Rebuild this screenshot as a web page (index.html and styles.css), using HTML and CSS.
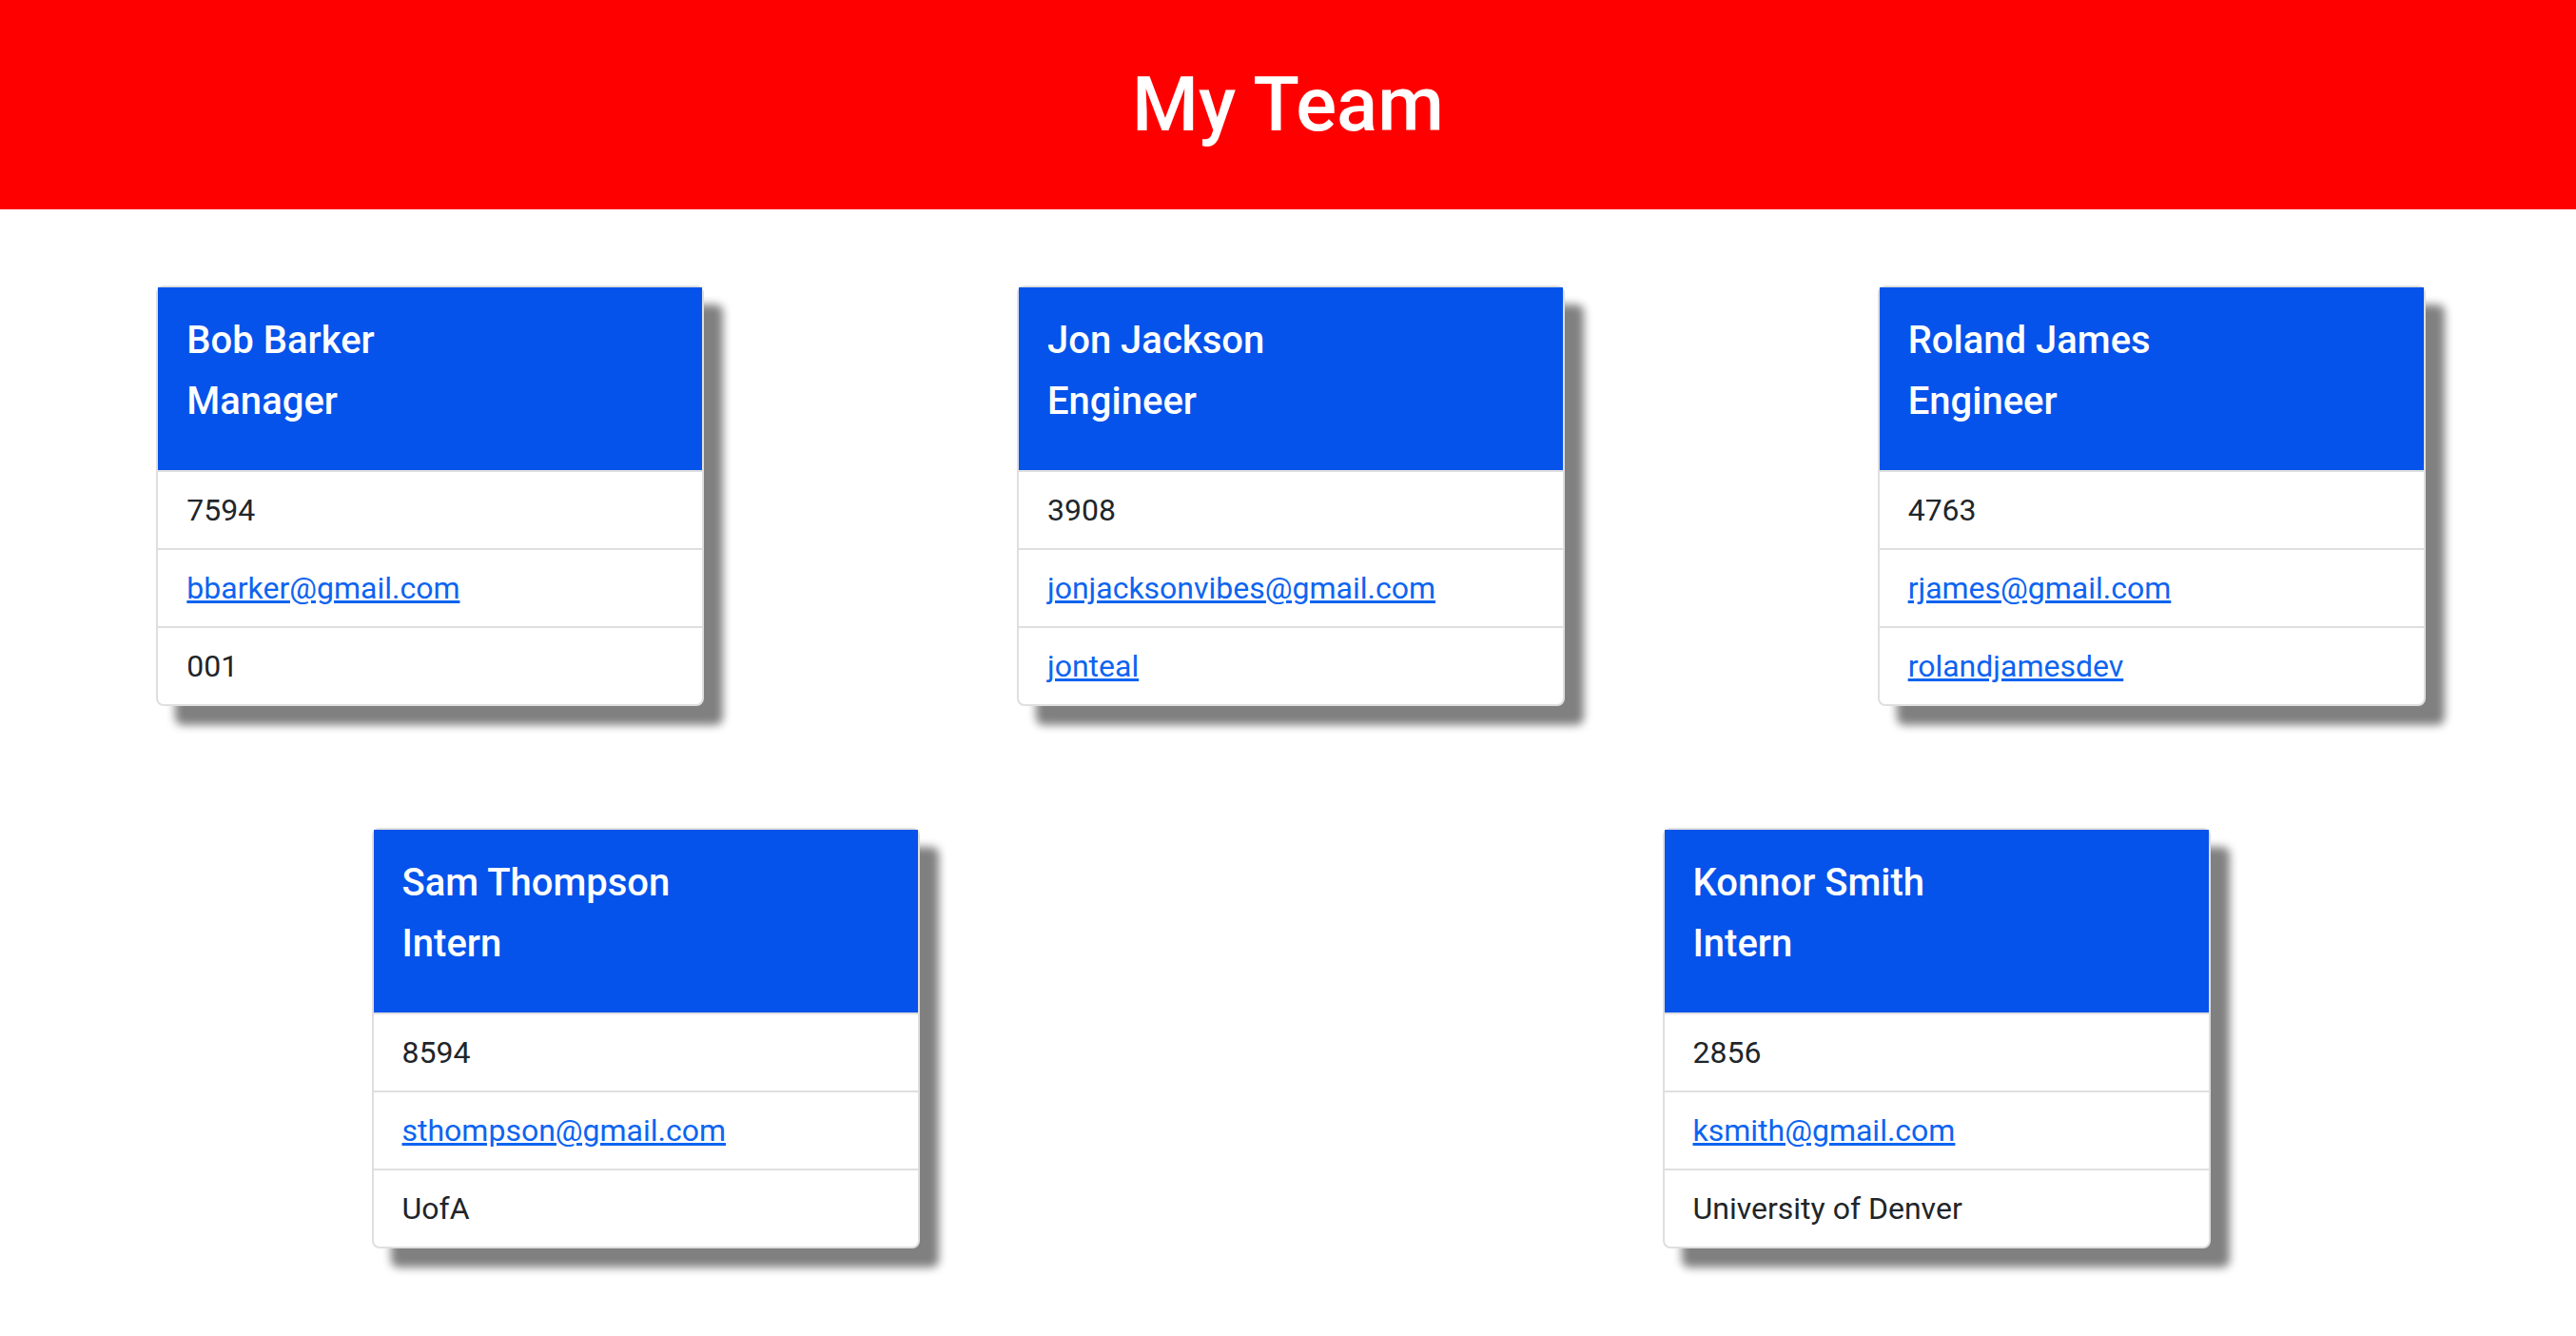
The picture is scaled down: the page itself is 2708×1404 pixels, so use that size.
FILE: index.html
```html
<!DOCTYPE html>
<html>
<head>
    <meta charset="UTF-8">
    <meta name="viewport" content="width=device-width, initial-scale=1.0">
    <title>My Team</title>
    <link rel="stylesheet" href="styles.css">
</head>
<body>
    <header class="banner">
        <h1>My Team</h1>
    </header>

    <main class="team">
        <div class="team-row">
            <div class="card">
                <div class="card-body">
                    <h5>Bob Barker</h5>
                    <h5>Manager</h5>
                </div>
                <ul class="list-group">
                    <li>7594</li>
                    <li><a href="mailto:bbarker@gmail.com">bbarker@gmail.com</a></li>
                    <li>001</li>
                </ul>
            </div>

            <div class="card">
                <div class="card-body">
                    <h5>Jon Jackson</h5>
                    <h5>Engineer</h5>
                </div>
                <ul class="list-group">
                    <li>3908</li>
                    <li><a href="mailto:jonjacksonvibes@gmail.com">jonjacksonvibes@gmail.com</a></li>
                    <li><a href="#">jonteal</a></li>
                </ul>
            </div>

            <div class="card">
                <div class="card-body">
                    <h5>Roland James</h5>
                    <h5>Engineer</h5>
                </div>
                <ul class="list-group">
                    <li>4763</li>
                    <li><a href="mailto:rjames@gmail.com">rjames@gmail.com</a></li>
                    <li><a href="#">rolandjamesdev</a></li>
                </ul>
            </div>
        </div>

        <div class="team-row">
            <div class="card">
                <div class="card-body">
                    <h5>Sam Thompson</h5>
                    <h5>Intern</h5>
                </div>
                <ul class="list-group">
                    <li>8594</li>
                    <li><a href="mailto:sthompson@gmail.com">sthompson@gmail.com</a></li>
                    <li>UofA</li>
                </ul>
            </div>

            <div class="card">
                <div class="card-body">
                    <h5>Konnor Smith</h5>
                    <h5>Intern</h5>
                </div>
                <ul class="list-group">
                    <li>2856</li>
                    <li><a href="mailto:ksmith@gmail.com">ksmith@gmail.com</a></li>
                    <li>University of Denver</li>
                </ul>
            </div>
        </div>
    </main>
</body>
</html>
```

FILE: styles.css
```css
body {
    margin: 0;
    overflow-x: hidden;
    font-family: Roboto, "Liberation Sans", sans-serif;
    font-size: 32px;
    line-height: 48px;
    color: #212529;
    background: #fff;
}

.banner {
    height: 220px;
    background: #ff0000;
    display: flex;
    align-items: center;
    justify-content: center;
}

.banner h1 {
    margin: 0;
    color: #fff;
    font-size: 80px;
    font-weight: 500;
    line-height: 96px;
}

.team {
    padding-top: 80px;
}

.team-row {
    display: flex;
    justify-content: space-around;
    margin-right: -6px;
    margin-bottom: 128px;
}

.card {
    width: 576px;
    box-sizing: border-box;
    border: 2px solid #dfdfdf;
    border-radius: 8px;
    background: #fff;
    box-shadow: 20px 20px 10px #808080;
}

.card-body {
    background: #0553eb;
    color: #fff;
    padding: 32px 30px;
}

.card-body h5 {
    margin: 0 0 16px;
    font-size: 40px;
    font-weight: 500;
    line-height: 48px;
}

.list-group {
    list-style: none;
    margin: 0;
    padding: 0;
}

.list-group li {
    padding: 16px 30px;
    border-top: 2px solid #dfdfdf;
}

.list-group a {
    color: #0d64f0;
    text-decoration: underline;
}
```
